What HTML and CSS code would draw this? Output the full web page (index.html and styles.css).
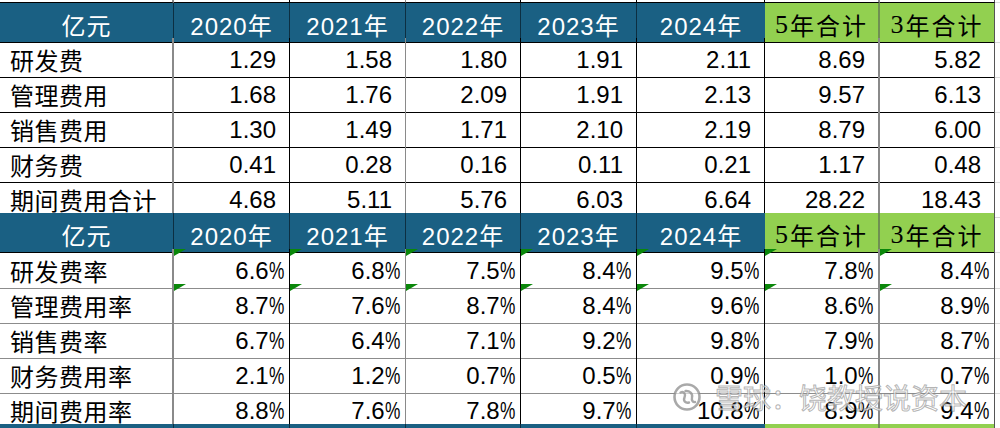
FILE: index.html
```html
<!DOCTYPE html>
<html lang="zh">
<head>
<meta charset="utf-8">
<title>费用表</title>
<link rel="stylesheet" href="styles.css">
</head>
<body>
<div class="sheet">
  <div class="row stub"><div></div><div></div><div></div><div></div><div></div><div></div><div></div><div></div><div class="ex"></div></div>

  <div class="row head">
    <div class="h">亿元</div><div class="h">2020年</div><div class="h">2021年</div><div class="h">2022年</div><div class="h">2023年</div><div class="h">2024年</div>
    <div class="g"><span class="d">5</span>年合计</div><div class="g"><span class="d">3</span>年合计</div><div class="ex"></div>
  </div>

  <div class="row top"><div class="lb">研发费</div><div class="n">1.29</div><div class="n">1.58</div><div class="n">1.80</div><div class="n">1.91</div><div class="n">2.11</div><div class="n">8.69</div><div class="n">5.82</div><div class="ex"></div></div>
  <div class="row top"><div class="lb">管理费用</div><div class="n">1.68</div><div class="n">1.76</div><div class="n">2.09</div><div class="n">1.91</div><div class="n">2.13</div><div class="n">9.57</div><div class="n">6.13</div><div class="ex"></div></div>
  <div class="row top"><div class="lb">销售费用</div><div class="n">1.30</div><div class="n">1.49</div><div class="n">1.71</div><div class="n">2.10</div><div class="n">2.19</div><div class="n">8.79</div><div class="n">6.00</div><div class="ex"></div></div>
  <div class="row top"><div class="lb">财务费</div><div class="n">0.41</div><div class="n">0.28</div><div class="n">0.16</div><div class="n">0.11</div><div class="n">0.21</div><div class="n">1.17</div><div class="n">0.48</div><div class="ex"></div></div>
  <div class="row top"><div class="lb">期间费用合计</div><div class="n">4.68</div><div class="n">5.11</div><div class="n">5.76</div><div class="n">6.03</div><div class="n">6.64</div><div class="n">28.22</div><div class="n">18.43</div><div class="ex"></div></div>

  <div class="row head tall">
    <div class="h">亿元</div><div class="h">2020年</div><div class="h">2021年</div><div class="h">2022年</div><div class="h">2023年</div><div class="h">2024年</div>
    <div class="g"><span class="d">5</span>年合计</div><div class="g"><span class="d">3</span>年合计</div><div class="ex"></div>
  </div>

  <div class="row pct first"><div class="lb">研发费率</div><div class="p flag">6.6<span class="pc">%</span></div><div class="p flag">6.8<span class="pc">%</span></div><div class="p flag">7.5<span class="pc">%</span></div><div class="p flag">8.4<span class="pc">%</span></div><div class="p flag">9.5<span class="pc">%</span></div><div class="p flag">7.8<span class="pc">%</span></div><div class="p flag">8.4<span class="pc">%</span></div><div class="ex"></div></div>
  <div class="row pct"><div class="lb">管理费用率</div><div class="p flag">8.7<span class="pc">%</span></div><div class="p flag">7.6<span class="pc">%</span></div><div class="p flag">8.7<span class="pc">%</span></div><div class="p flag">8.4<span class="pc">%</span></div><div class="p flag">9.6<span class="pc">%</span></div><div class="p flag">8.6<span class="pc">%</span></div><div class="p flag">8.9<span class="pc">%</span></div><div class="ex"></div></div>
  <div class="row pct"><div class="lb">销售费率</div><div class="p">6.7<span class="pc">%</span></div><div class="p">6.4<span class="pc">%</span></div><div class="p">7.1<span class="pc">%</span></div><div class="p">9.2<span class="pc">%</span></div><div class="p">9.8<span class="pc">%</span></div><div class="p">7.9<span class="pc">%</span></div><div class="p">8.7<span class="pc">%</span></div><div class="ex"></div></div>
  <div class="row pct"><div class="lb">财务费用率</div><div class="p">2.1<span class="pc">%</span></div><div class="p">1.2<span class="pc">%</span></div><div class="p">0.7<span class="pc">%</span></div><div class="p">0.5<span class="pc">%</span></div><div class="p">0.9<span class="pc">%</span></div><div class="p">1.0<span class="pc">%</span></div><div class="p">0.7<span class="pc">%</span></div><div class="ex"></div></div>
  <div class="row pct"><div class="lb">期间费用率</div><div class="p">8.8<span class="pc">%</span></div><div class="p">7.6<span class="pc">%</span></div><div class="p">7.8<span class="pc">%</span></div><div class="p">9.7<span class="pc">%</span></div><div class="p">10.8<span class="pc">%</span></div><div class="p">8.9<span class="pc">%</span></div><div class="p">9.4<span class="pc">%</span></div><div class="ex"></div></div>

  <div class="row head">
    <div class="h"></div><div class="h"></div><div class="h"></div><div class="h"></div><div class="h"></div><div class="h"></div>
    <div class="g"></div><div class="g"></div><div class="ex"></div>
  </div>
</div>

<div class="wm">
  <svg class="wm-logo" width="30" height="32" viewBox="0 0 30 32">
    <circle cx="15" cy="16" r="12.5" fill="rgba(255,255,255,0.6)" stroke="rgba(140,140,140,0.75)" stroke-width="2.6"/>
    <path d="M8.5 11.5 C12 10 14 13 12.5 16.5 C11 20 13.5 22.5 17 21.5" fill="none" stroke="rgba(140,140,140,0.75)" stroke-width="2.4" stroke-linecap="round"/>
    <path d="M13.5 10 C17.5 9.5 21 12.5 20 16.5 C19.3 19.5 21 21.5 23 21" fill="none" stroke="rgba(140,140,140,0.75)" stroke-width="2.4" stroke-linecap="round"/>
  </svg>
  <span class="wm-text">雪球：饶教授说资本</span>
</div>
</body>
</html>
```

FILE: styles.css
```css
body {
  margin: 0;
  background: #ffffff;
  overflow: hidden;
  font-family: "Liberation Sans", "Noto Sans CJK SC", sans-serif;
}

.sheet {
  width: 1000px;
}

.row {
  display: grid;
  grid-template-columns: 174px 116px 116px 115px 116px 128px 115px 115px 5px;
  height: 35px;
}

.row.stub { height: 3px; }
.row.tall { height: 36px; }

.row > div {
  box-sizing: border-box;
  display: flex;
  align-items: center;
  padding-top: 4px;
  font-size: 24px;
  color: #000000;
  white-space: nowrap;
  position: relative;
  border-bottom: 1px solid #000000;
}

/* column right borders in body rows */
.row > div:nth-child(1) { border-right: 2px solid #8a8a8a; }
.row > div:nth-child(2) { border-right: 1px solid #000000; }
.row > div:nth-child(3) { border-right: 1px solid #8a8a8a; }
.row > div:nth-child(4) { border-right: 1px solid #000000; }
.row > div:nth-child(5) { border-right: 1px solid #000000; }
.row > div:nth-child(6) { border-right: 1px solid #000000; }
.row > div:nth-child(7) { border-right: 2px solid #8a8a8a; }
.row > div:nth-child(8) { border-right: 1px solid #555555; }

.row > div.ex {
  border-right: none;
  border-bottom: 1px solid #d9d9d9;
}

.row.stub > div { padding: 0; }

/* percent table uses gray row lines */
.row.pct > div { border-bottom-color: #8c8c8c; }
.row.pct > div.ex { border-bottom-color: #d9d9d9; }

/* header rows */
.row.head > div.h {
  background: #1a6083;
  color: #ffffff;
  justify-content: center;
  letter-spacing: 1px;
  border-right: 1px solid #0c2f42;
  border-bottom-color: #000000;
}
.row.head > div.h:nth-child(6) { border-right: none; }

.row.head > div.g {
  background: #92d050;
  color: #000000;
  justify-content: center;
  letter-spacing: 2px;
  border-bottom-color: #000000;
}
.row.head > div.g:nth-child(7) { border-right: 2px solid #6f8f52; }
.row.head > div.g:nth-child(8) { border-right: 1px solid #555555; }

.d {
  font-family: "Liberation Serif", serif;
  font-size: 26px;
}

/* labels and numbers */
.lb {
  justify-content: flex-start;
  padding-left: 10px;
  letter-spacing: 0.5px;
  font-family: "Noto Sans CJK SC", sans-serif;
}

.n {
  justify-content: flex-end;
  padding-right: 13px;
}

.p {
  justify-content: flex-end;
  padding-right: 5px;
}

/* narrow percent sign as in the sheet's font */
.pc {
  display: inline-block;
  transform: scaleX(0.72);
  transform-origin: left center;
  margin-right: -6px;
}

/* Excel error-indicator triangles */
.flag::before {
  content: "";
  position: absolute;
  left: 0;
  top: 0;
  width: 0;
  height: 0;
  border-top: 7px solid #0a870a;
  border-right: 12px solid transparent;
}

/* watermark overlay */
.wm {
  position: absolute;
  left: 672px;
  top: 380px;
  display: flex;
  align-items: center;
  gap: 13px;
  pointer-events: none;
}

.wm-text {
  font-family: "Noto Sans CJK SC", sans-serif;
  font-size: 28px;
  line-height: 34px;
  color: rgba(255, 255, 255, 0.7);
  -webkit-text-stroke: 1px rgba(130, 130, 130, 0.6);
}
```
